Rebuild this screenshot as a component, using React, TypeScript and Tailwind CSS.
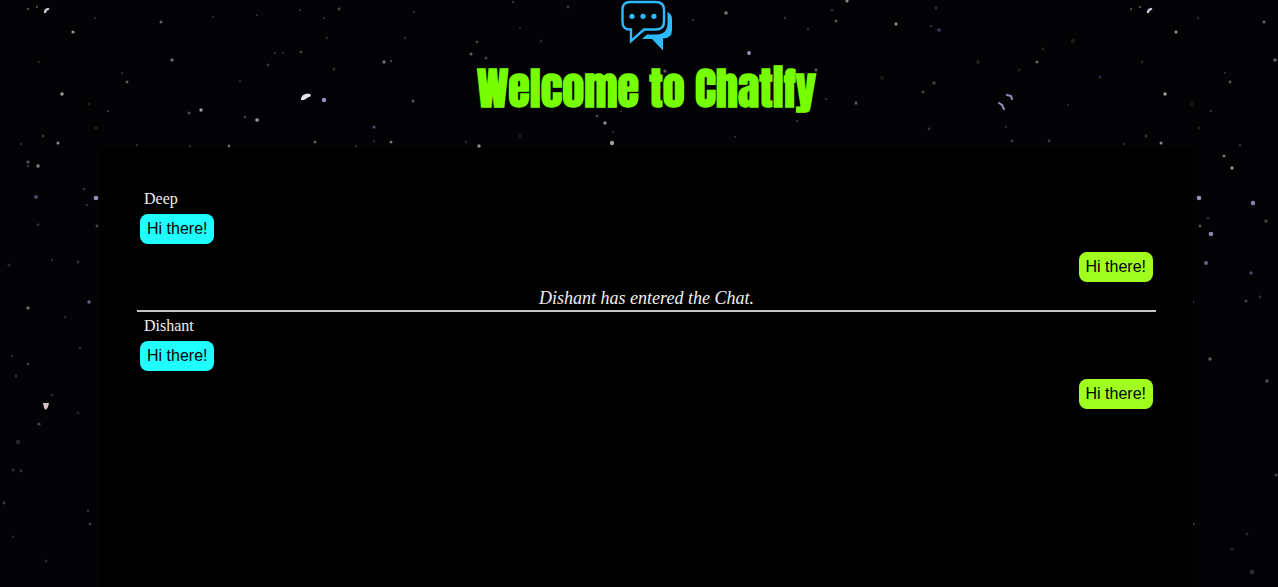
type Star = [x: number, y: number, r: number, color: string, opacity: number];

const TILE_WIDTH = 1103;

const stars: Star[] = [
  [28, 9, 1.2, "#8d8a86", 0.5], [37, 7, 1.2, "#8d8a86", 0.5], [73, 32, 1.6, "#c9c5bd", 0.75],
  [95, 18, 1, "#777", 0.45], [161, 22, 1.5, "#a5a9b5", 0.6], [172, 60, 1.7, "#a5a4bd", 0.6],
  [127, 82, 1.4, "#9b988f", 0.6], [62, 94, 1.7, "#d4d4cf", 0.75], [189, 113, 1.5, "#8f8fa3", 0.5],
  [201, 110, 1.7, "#c7c6d6", 0.8], [257, 120, 1.8, "#b9bfd4", 0.8], [245, 117, 1.2, "#888", 0.5],
  [324, 100, 2.2, "#aaa6d8", 0.9], [384, 62, 1.7, "#a5a9bb", 0.65], [391, 61, 1.2, "#808090", 0.5],
  [339, 9, 1.4, "#8a8a88", 0.5], [300, 10, 1.2, "#777", 0.4], [301, 52, 1.5, "#908872", 0.45],
  [275, 53, 1.1, "#777", 0.4], [283, 53, 1.1, "#777", 0.35], [268, 65, 1.6, "#66606f", 0.5],
  [334, 69, 1.5, "#77716a", 0.4], [324, 18, 1.1, "#777", 0.4], [327, 38, 1.4, "#6f6a58", 0.3],
  [405, 38, 1.2, "#777", 0.4], [413, 101, 1.5, "#8b86b8", 0.6], [374, 127, 1.5, "#8f8fb5", 0.55],
  [374, 141, 1.2, "#777", 0.3], [391, 142, 1.5, "#aaa", 0.65], [315, 142, 1.5, "#999", 0.6],
  [356, 146, 1.2, "#777", 0.4], [229, 146, 1.4, "#aaa", 0.6], [190, 146, 1.2, "#777", 0.4],
  [58, 143, 1.5, "#b5b5c9", 0.75], [43, 136, 1.4, "#87806f", 0.4], [21, 144, 1.2, "#777", 0.35],
  [108, 111, 1.2, "#777", 0.4], [96, 128, 1.5, "#777064", 0.3], [137, 145, 1.2, "#777", 0.4],
  [89, 104, 1.6, "#6a6247", 0.25], [39, 62, 1.4, "#6a6247", 0.3], [122, 73, 1.2, "#777", 0.3],
  [240, 81, 1.2, "#777", 0.35], [213, 17, 1.2, "#777", 0.3], [257, 15, 1.2, "#777", 0.3],
  [414, 12, 1.2, "#777", 0.4], [477, 42, 1.4, "#88857f", 0.5], [471, 54, 1.6, "#9a9a9a", 0.6],
  [486, 58, 1.5, "#77777f", 0.5], [513, 2, 1.3, "#77777f", 0.4], [568, 7, 1.5, "#777", 0.45],
  [520, 28, 1.2, "#777", 0.3], [541, 41, 1.6, "#55535a", 0.4], [665, 71, 1.6, "#aaa", 0.55],
  [597, 116, 1.3, "#999", 0.5], [605, 123, 1.7, "#bbb9c0", 0.75], [612, 143, 2.2, "#c9c5bd", 0.8],
  [613, 132, 1.2, "#777", 0.3], [479, 146, 1.7, "#bbb9c0", 0.75], [466, 142, 1.3, "#777", 0.35],
  [520, 136, 1.2, "#777", 0.3], [621, 111, 1.2, "#777", 0.3], [726, 13, 1.7, "#b9b9b9", 0.65],
  [693, 20, 1.2, "#777", 0.4], [749, 53, 1.9, "#b5b2dc", 0.85], [785, 18, 1.2, "#777", 0.4],
  [808, 29, 1.2, "#777", 0.4], [816, 70, 1.5, "#99949c", 0.6], [836, 21, 1.5, "#999", 0.55],
  [832, 10, 1.3, "#777", 0.4], [847, 1, 1.6, "#bbb", 0.7], [797, 121, 1.3, "#777", 0.4],
  [826, 99, 1.3, "#777", 0.3], [735, 137, 1.2, "#777", 0.3], [896, 24, 1.7, "#aaa894", 0.75],
  [936, 8, 1.4, "#777", 0.45], [939, 30, 1.8, "#6460a0", 0.6], [931, 26, 1.3, "#777", 0.4],
  [934, 83, 1.8, "#77715f", 0.5], [923, 92, 1.4, "#8a8570", 0.5], [856, 103, 1.7, "#7b79a8", 0.6],
  [978, 62, 1.9, "#55504a", 0.4], [1037, 62, 1.6, "#99998a", 0.65], [1019, 70, 1.6, "#555040", 0.4],
  [1043, 49, 1.4, "#555040", 0.4], [1073, 41, 2, "#555040", 0.35], [1100, 77, 1.4, "#5b57a0", 0.5],
  [1012, 141, 1.4, "#777", 0.5], [1049, 141, 1.4, "#777", 0.5], [929, 129, 1.4, "#777", 0.4],
  [1006, 127, 1.3, "#777", 0.3], [1068, 105, 1.2, "#777", 0.3], [882, 78, 2, "#4d4838", 0.3],
  [28, 162, 1.6, "#99999f", 0.55], [38, 166, 1.7, "#bbb9b9", 0.7], [28, 166, 1.2, "#777", 0.4],
  [36, 197, 1.9, "#7e7ca5", 0.6], [96, 198, 2.3, "#b0addb", 0.85], [84, 189, 1.5, "#777", 0.4],
  [87, 205, 1.3, "#777", 0.35], [38, 225, 1.4, "#777", 0.4], [97, 226, 1.4, "#888", 0.5],
  [9, 265, 1.5, "#777", 0.35], [52, 260, 1.4, "#777", 0.3], [78, 262, 1.5, "#777", 0.4],
  [28, 308, 1.8, "#999", 0.65], [89, 302, 1.7, "#9c9ac0", 0.65], [65, 317, 1.3, "#777", 0.3],
  [80, 348, 1.4, "#777", 0.35], [28, 364, 1.6, "#888", 0.4], [12, 356, 1.3, "#777", 0.3],
  [16, 376, 1.4, "#777", 0.4], [52, 395, 1.3, "#777", 0.35], [39, 424, 1.6, "#888", 0.5],
  [78, 413, 1.4, "#777", 0.3], [18, 442, 2.2, "#666", 0.35], [13, 470, 1.5, "#777", 0.4],
  [21, 471, 1.4, "#777", 0.4], [4, 503, 1.4, "#888", 0.45], [88, 511, 1.4, "#777", 0.4],
  [90, 524, 1.4, "#888", 0.45], [13, 537, 1.4, "#777", 0.3], [46, 561, 1.6, "#777", 0.3],
];

const rightEdgeStars: Star[] = [
  [1224, 156, 1.6, "#aaa", 0.65], [1232, 168, 1.8, "#bbb6a5", 0.75], [1253, 203, 2.2, "#aaa7d3", 0.8],
  [1211, 234, 2.3, "#aaa7d3", 0.8], [1206, 263, 2, "#8e8bbb", 0.7], [1251, 273, 1.7, "#77759a", 0.6],
  [1266, 221, 1.8, "#888072", 0.5], [1246, 301, 1.5, "#888", 0.5], [1260, 297, 1.4, "#777", 0.4],
  [1210, 359, 1.7, "#999", 0.6], [1267, 381, 1.8, "#7c7c92", 0.6], [1276, 475, 1.5, "#888", 0.5],
  [1247, 534, 1.5, "#777", 0.35], [1232, 549, 1.5, "#777", 0.35], [1252, 572, 2.4, "#555263", 0.5],
  [1208, 218, 1.3, "#777", 0.4], [1200, 226, 1.2, "#777", 0.4],
];

function StarDots({ items }: { items: Star[] }) {
  return (
    <>
      {items.map(([x, y, r, color, opacity]) => (
        <circle key={`${x}-${y}`} cx={x} cy={y} r={r} fill={color} opacity={opacity} />
      ))}
    </>
  );
}

function Starfield() {
  return (
    <svg aria-hidden="true" className="absolute inset-0 h-full w-full">
      <defs>
        <filter id="glow" x="0" y="0" width="100%" height="100%" colorInterpolationFilters="sRGB">
          <feGaussianBlur stdDeviation="0.7" />
        </filter>
        <pattern id="sky" width={TILE_WIDTH} height="600" patternUnits="userSpaceOnUse">
          <StarDots items={stars} />
          <path d="M45 12 46 10 48 9" stroke="#c9c7d8" strokeWidth="2.5" strokeLinecap="round" fill="none" />
          <path d="M301 100c0-5 4-7 9-6l1 2-4 2-3 2Z" fill="#e8e5ef" />
          <path d="M1007 95l4 1 1 3M999 103l3 2 2 4" stroke="#9693c0" strokeWidth="2" strokeLinecap="round" fill="none" />
          <path d="M43 403h6l-1 4-2 3-2-2Z" fill="#d6c3c5" />
        </pattern>
      </defs>
      <g filter="url(#glow)">
        <rect width="100%" height="100%" fill="url(#sky)" />
        <StarDots items={rightEdgeStars} />
      </g>
    </svg>
  );
}

function ChatLogo() {
  return (
    <svg aria-hidden="true" viewBox="0 0 52 51" className="h-[51px] w-[52px]">
      <path
        d="M9 2H35Q43 2 43 10V21.500Q43 29.500 35 29.500H23L10 41V29.500H9Q1.500 29.500 1.500 22V9.500Q1.500 2 9 2Z"
        fill="none"
        stroke="#2dbaff"
        strokeWidth="2.400"
      />
      <circle cx="11" cy="16.300" r="2.600" fill="#2dbaff" />
      <circle cx="22" cy="16.300" r="2.600" fill="#2dbaff" />
      <circle cx="33" cy="16.300" r="2.600" fill="#2dbaff" />
      <path
        d="M46.500 12Q51 14 51 19V30Q51 38.500 42 38.500V50.500L31 39H21L26 34.500H36Q46.500 34 46.500 23Z"
        fill="#2dbaff"
      />
    </svg>
  );
}

type Entry =
  | { kind: "received"; author: string; text: string }
  | { kind: "sent"; text: string }
  | { kind: "notice"; text: string };

const entries: Entry[] = [
  { kind: "received", author: "Deep", text: "Hi there!" },
  { kind: "sent", text: "Hi there!" },
  { kind: "notice", text: "Dishant has entered the Chat." },
  { kind: "received", author: "Dishant", text: "Hi there!" },
  { kind: "sent", text: "Hi there!" },
];

const bubble =
  "rounded-lg px-[7px] py-[3px] text-base leading-6 text-black font-['Liberation_Sans',Arial,sans-serif]";

function ChatEntry({ entry }: { entry: Entry }) {
  if (entry.kind === "notice") {
    return (
      <li className="mb-[2px] border-b-2 border-[#c4c4c4] pb-[2px] text-center text-[18px] leading-5 italic">
        {entry.text}
      </li>
    );
  }
  if (entry.kind === "sent") {
    return (
      <li className="mb-[6px] flex justify-end px-[3px]">
        <p className={`${bubble} bg-[#a0ff1f]`}>{entry.text}</p>
      </li>
    );
  }
  return (
    <li className="mb-2 flex flex-col items-start gap-[3px] px-[3px]">
      <span className="px-1 text-base leading-6">{entry.author}</span>
      <p className={`${bubble} bg-[#1fffff]`}>{entry.text}</p>
    </li>
  );
}

export default function App() {
  return (
    <div className="relative flex min-h-screen flex-col bg-[#030306]">
      <Starfield />
      <div className="relative flex grow flex-col pl-[15px]">
        <header className="flex flex-col items-center pb-8">
          <ChatLogo />
          <h1 className="mt-[9px] text-[44px] leading-[56px] font-bold text-[#76ff03] font-[Impact,Anton,sans-serif]">
            Welcome to Chatify
          </h1>
        </header>
        <main className="mx-[85px] grow bg-black px-[37px] pt-[39px] font-['Liberation_Serif','Times_New_Roman',serif] text-[#f0f0f0]">
          <ul>
            {entries.map((entry, index) => (
              <ChatEntry key={index} entry={entry} />
            ))}
          </ul>
        </main>
      </div>
    </div>
  );
}
